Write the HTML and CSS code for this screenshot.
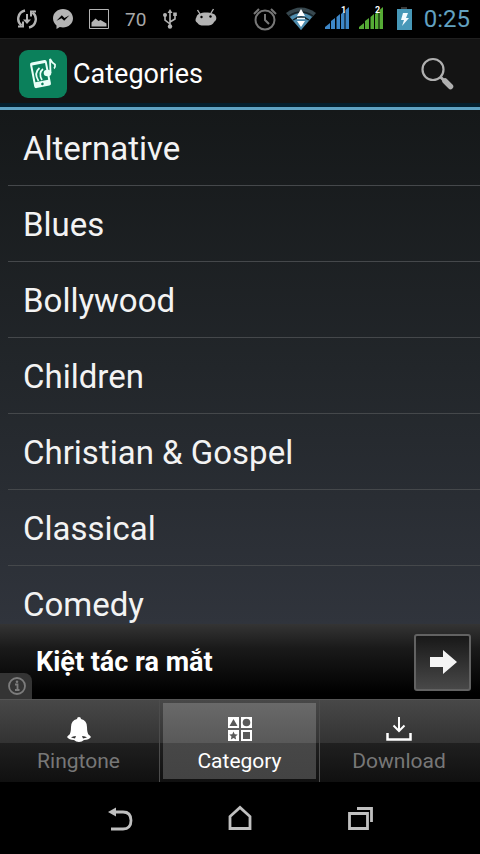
FILE: index.html
```html
<!DOCTYPE html>
<html lang="en">
<head>
<meta charset="utf-8">
<meta name="viewport" content="width=device-width, initial-scale=1">
<title>Categories</title>
<link rel="stylesheet" href="styles.css">
</head>
<body>
<div class="status">
  <div class="status-left">
    <svg width="20" height="22" viewBox="0 0 20 22" fill="none" stroke="#b4b4b4" stroke-width="2.4"><path d="M8 2.500A8.500 8.500 0 0 0 4.500 17.500M12 19.500A8.500 8.500 0 0 0 15.500 4.500"/><path d="M1 18.500h5v-5M19 3.500h-5v5" stroke-width="2"/><path d="M10 6v7" stroke-width="2"/><path d="M6 11.500h8l-4 4.500z" fill="#b4b4b4" stroke="none"/></svg>
    <svg width="20" height="22" viewBox="0 0 20 22"><path d="M10 1C4.500 1 0 5 0 10.300c0 3 1.400 5.500 3.500 7.200V21l3.300-1.900c1 .3 2.100.4 3.200.4 5.500 0 10-4 10-9.200S15.500 1 10 1z" fill="#b4b4b4"/><path d="M3.500 12.800 8.800 7.300l2.700 2.600 5-2.600-5.300 5.500-2.700-2.600z" fill="#000"/></svg>
    <svg width="20" height="22" viewBox="0 0 20 22"><path d="M.5 1.500h19v19H.5z" fill="none" stroke="#b4b4b4"/><path d="M2.500 18.500v-4l4-4 3 2.500 2-1 6 3.500v3z" fill="#b4b4b4"/></svg>
    <span class="percent">70</span>
    <svg width="18" height="22" viewBox="0 0 18 22" fill="none" stroke="#b4b4b4" stroke-width="1.600"><path d="M9 3v15M9 16l-5-4V8M9 14l5-3V7"/><path d="M6.500 5 9 1l2.500 4zM12.200 4.500h3.600V8h-3.600z" fill="#b4b4b4" stroke="none"/><circle cx="4" cy="7" r="2" fill="#b4b4b4" stroke="none"/><circle cx="9" cy="18.500" r="2.200" fill="#b4b4b4" stroke="none"/></svg>
    <svg width="22" height="22" viewBox="0 0 22 22"><path d="M2.500 2 5 6M18.500 1 16 5" stroke="#b4b4b4" stroke-width="1.400"/><path d="M1.500 9C2 6 6 4.500 11 4.500S20 5.500 21 8.500c1 3-.5 4.500-2 5.500-1 3-4.500 3.500-8 3.500S4 18 2.500 15C0 13.500 0 11.500 1.500 9z" fill="#b4b4b4"/><circle cx="6.500" cy="9" r="1.200"/><circle cx="15.500" cy="8.500" r="1.200"/></svg>
  </div>
  <div class="status-right">
    <svg width="24" height="24" viewBox="0 0 24 24" fill="none" stroke="#777" stroke-width="2"><circle cx="12" cy="13" r="9.500"/><path d="M12 7v6l4 4M1 7l5-5M23 7l-5-5"/></svg>
    <svg width="30" height="24" viewBox="0 0 30 24"><path d="M0 6Q15-5 30 6L15 23z" fill="#37474e"/><path d="M4 10q11-8 22 0L15 23z" fill="#4d8cae"/><path d="M3 9q12-8 24 0M7 13q8-6 16 0" fill="none" stroke="#152329" stroke-width="1.500"/><path d="m15 2 4 7h-8zM15 20l-4-6h8z" fill="#fff"/><path d="M11 11.500h8" stroke="#eaf6fb" stroke-width="1.500"/></svg>
    <svg width="25" height="26" viewBox="0 0 25 26"><path d="M0 23v-2l5-4v6zM6 23v-8l4-3v11zM11.500 23V11l3.500-3v15zM16 23V8l3.500-3v18zM20.500 23V4L24 1v22z" fill="#3d86c6"/><text x="16" y="7" class="sim">1</text></svg>
    <svg width="25" height="26" viewBox="0 0 25 26"><path d="M0 23v-2l5-4v6zM6 23v-8l4-3v11zM11.500 23V11l3.500-3v15zM16 23V8l3.500-3v18zM20.500 23V4L24 1v22z" fill="#55ab35"/><text x="16" y="7" class="sim">2</text></svg>
    <svg width="22" height="24" viewBox="0 0 22 24"><path d="M8 0h6v3H8z" fill="#3a3a3a"/><path d="M4 2h15v21H4z" fill="#4798b8"/><path d="M10 6h5l-2 5h3l-7 8 2-6H8z" fill="#f4fbff"/></svg>
    <time class="clock">0:25</time>
  </div>
</div>

<header class="bar">
  <svg class="app-icon" width="48" height="48" viewBox="0 0 48 48"><rect width="48" height="48" rx="9" fill="#0b805b"/><g transform="rotate(-11 22 24)"><rect x="13" y="11" width="17" height="26" rx="2" fill="#e9fff7"/><path d="M15 14h13v17H15z" fill="#0b805b"/><circle cx="21.500" cy="34" r="1.300" fill="#0b805b"/></g><path d="M24 19q-5 4-1 11M20.500 18q-6 5-1 13" fill="none" stroke="#e9fff7" stroke-width="1.700"/><ellipse cx="28.500" cy="23" rx="3.800" ry="3.300" fill="#e9fff7"/><path d="M31.500 23 31 9q2 4 5 5.500.5 3-1 4" fill="none" stroke="#e9fff7" stroke-width="1.800"/></svg>
  <h1>Categories</h1>
  <button class="search" type="button" aria-label="Search"><svg width="34" height="34" viewBox="0 0 34 34" fill="none" stroke="#b0b0b0"><circle cx="12" cy="12.500" r="10.500" stroke-width="2.200"/><path d="m19.500 20 4 4" stroke-width="3"/><path d="m24 24 5.500 5.500" stroke-width="5.500" stroke-linecap="round"/></svg></button>
</header>

<main class="list-wrap">
  <ul class="list">
    <li><a href="#">Alternative</a></li>
    <li><a href="#">Blues</a></li>
    <li><a href="#">Bollywood</a></li>
    <li><a href="#">Children</a></li>
    <li><a href="#">Christian &amp; Gospel</a></li>
    <li><a href="#">Classical</a></li>
    <li><a href="#">Comedy</a></li>
  </ul>
</main>

<aside class="ad" lang="vi">
  <a class="ad-title" href="#">Kiệt tác ra mắt</a>
  <button class="ad-go" type="button" aria-label="Open"><svg width="28" height="24" viewBox="0 0 28 24"><path d="M1 7h13V0l14 12-14 12v-7H1z" fill="#f4f4f4"/></svg></button>
  <button class="ad-info" type="button" aria-label="Ad information"><svg width="20" height="20" viewBox="0 0 20 20"><circle cx="10" cy="10" r="8" fill="none" stroke="#7c7c7c" stroke-width="1.800"/><path d="M8 8.500h2.500V14M8 14h4.500" fill="none" stroke="#7c7c7c" stroke-width="1.800"/><circle cx="10" cy="5.800" r="1.300" fill="#7c7c7c"/></svg></button>
</aside>

<nav class="tabs">
  <a class="tab" href="#"><svg width="26" height="26" viewBox="0 0 26 26"><path d="M13 1q2 0 2 2 6 1.500 6 8 0 6 2 8.500H3Q5 17 5 11q0-6.500 6-8 0-2 2-2z" fill="#fff"/><path d="M1 21q2-4 12-4t12 4q-2 3-7 3-2 2-5 2t-5-2q-5 0-7-3z" fill="#fff"/><path d="M5 21.500q1.500-1.500 5-1.500l-1 2.500zM21 21.500Q19.500 20 16 20l1 2.500z" fill="#333"/></svg>Ringtone</a>
  <a class="tab active" href="#" aria-current="page"><svg width="26" height="26" viewBox="0 0 26 26"><path d="M1 1h11v11H1zM14 1h11v11H14zM1 14h11v11H1zM14 14h11v11H14z" fill="#fff"/><path d="m6.500 3 4 7h-8zM6.500 15.500l1.200 2.700 3 .3-2.200 2 .6 3-2.600-1.600-2.600 1.600.6-3-2.200-2 3-.3zM16 16h7v7h-7z" fill="#5a5a5a"/><circle cx="19.500" cy="6.500" r="3.800" fill="#5a5a5a"/></svg>Category</a>
  <a class="tab" href="#"><svg width="26" height="26" viewBox="0 0 26 26" fill="none" stroke="#fff"><path d="M1.500 17v6.500h23V17" stroke-width="2.500"/><path d="M13 1v14M7.500 9.500 13 15l5.500-5.500" stroke-width="2"/></svg>Download</a>
</nav>

<div class="keys">
  <button type="button" aria-label="Back"><svg width="28" height="28" viewBox="0 0 28 28"><path d="M8 8h9q8 0 8 8.500t-8 8.500H5" fill="none" stroke="#c0c0c0" stroke-width="2.800"/><path d="M2 8 10 3.500v9z" fill="#c0c0c0"/></svg></button>
  <button type="button" aria-label="Home"><svg width="28" height="28" viewBox="0 0 28 28"><path d="M4 24.500V12.500l10-9 10 9v12z" fill="none" stroke="#c0c0c0" stroke-width="2.800"/></svg></button>
  <button type="button" aria-label="Recent apps"><svg width="28" height="28" viewBox="0 0 28 28" fill="none" stroke="#c0c0c0" stroke-width="2.800"><path d="M3.500 9.500h18v15h-18zM11 4.500h14.500V18"/></svg></button>
</div>
</body>
</html>
```

FILE: styles.css
```css
* { box-sizing: border-box; }
body {
  margin: 0;
  height: 100vh;
  display: flex;
  flex-direction: column;
  overflow: hidden;
  background: #000;
  color: #f3f3f3;
  font-family: Roboto, "Liberation Sans", sans-serif;
}
svg { display: block; flex: none; }
a { color: inherit; text-decoration: none; }
button { border: 0; padding: 0; background: none; font: inherit; color: inherit; }

.status {
  flex: none;
  height: 38px;
  display: flex;
  justify-content: space-between;
  align-items: center;
  padding: 0 10px 0 17px;
}
.status-left, .status-right { display: flex; align-items: center; }
.status-left { gap: 16px; }
.status-right { gap: 9px; }
.percent { width: 20px; font-size: 19px; color: #a8a8a8; }
.sim { font-size: 9px; font-weight: 700; fill: #fff; }
.clock { font-size: 24px; color: #62a2c0; }

.bar {
  flex: none;
  height: 72px;
  display: flex;
  align-items: center;
  gap: 6px;
  padding: 1px 25px 0 19px;
  background: #141414;
  border-top: 1px solid #1f1f1f;
  border-bottom: 3px solid #5fa3c4;
  box-shadow: inset 0 -4px 0 #04202f;
}
.bar h1 { margin: 0; flex: 1; font-size: 27px; font-weight: 400; color: #fff; }

.list-wrap {
  flex: 1;
  min-height: 0;
  overflow: hidden;
  background: linear-gradient(#151819, #22262a 50%, #30343c);
}
.list { margin: 0; padding: 0 0 0 8px; list-style: none; }
.list li { border-bottom: 1px solid #45484b; }
.list a {
  display: block;
  padding: 2px 15px 0;
  font-size: 33px;
  line-height: 73px;
}

.ad {
  flex: none;
  position: relative;
  height: 75px;
  display: flex;
  align-items: center;
  justify-content: space-between;
  padding: 1px 9px 0 36px;
  background: linear-gradient(#343434, #1a1a1a 32%, #000 92%);
}
.ad-title { font-size: 27px; font-weight: 700; color: #fff; }
.ad-go {
  width: 57px;
  height: 57px;
  display: flex;
  align-items: center;
  justify-content: center;
  border: 2px solid #626262;
  border-radius: 3px;
  background: linear-gradient(#181818, #484848);
}
.ad-info {
  position: absolute;
  left: 0;
  bottom: 0;
  width: 32px;
  height: 26px;
  display: flex;
  align-items: center;
  padding-left: 7px;
  border-radius: 0 8px 0 0;
  background: #343434;
}

.tabs {
  flex: none;
  height: 83px;
  display: grid;
  grid-template-columns: repeat(3, 1fr);
  background: linear-gradient(#484848, #333 52%, #202020 52%, #101010);
  border-top: 1px solid #555;
}
.tab {
  display: flex;
  flex-direction: column;
  align-items: center;
  gap: 6px;
  padding: 16px 2px 0 0;
  font-size: 21px;
  line-height: 26px;
  color: #777;
}
.tab:not(:last-child) { border-right: 1px solid #4c4c4c; }
.tab.active {
  color: #fff;
  background: linear-gradient(#696969, #595959 52%, #474747 52%, #434343) no-repeat content-box;
  padding: 3px;
}
.tab.active svg { margin-top: 13px; }

.keys {
  flex: none;
  height: 72px;
  display: flex;
  justify-content: center;
  align-items: center;
  gap: 92px;
}
```
